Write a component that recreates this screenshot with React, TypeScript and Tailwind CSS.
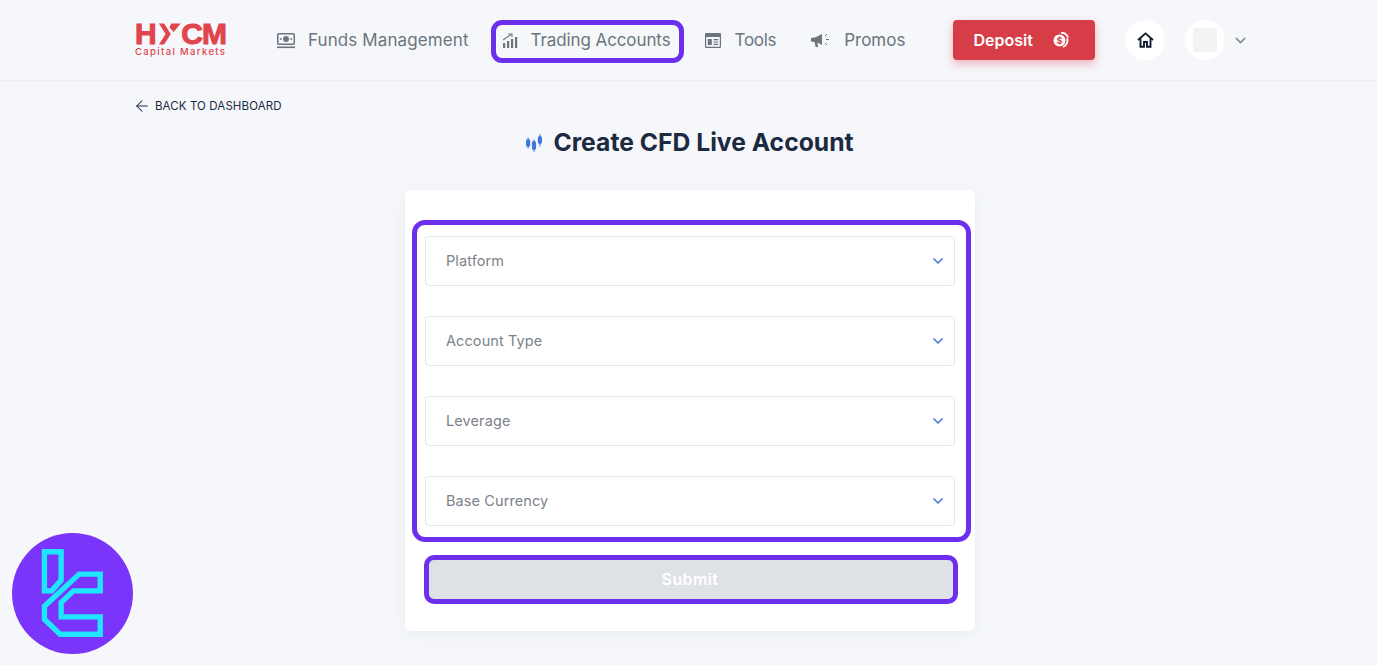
import { ChevronDown, ArrowLeft } from 'lucide-react';

function FundsIcon() {
  return (
    <svg width="18" height="16" viewBox="0 0 18 16" className="text-[#6c757d]">
      <rect x="0.75" y="0.75" width="16.5" height="10.5" rx="1" fill="none" stroke="currentColor" strokeWidth="1.5" />
      <circle cx="9" cy="6" r="3" fill="currentColor" />
      <circle cx="3.8" cy="6" r="0.9" fill="currentColor" />
      <circle cx="14.2" cy="6" r="0.9" fill="currentColor" />
      <rect x="0" y="13.5" width="18" height="1.6" fill="currentColor" />
    </svg>
  );
}

function ChartIcon() {
  return (
    <svg width="15" height="15" viewBox="0 0 15 15" className="text-[#6c757d]">
      <rect x="0" y="10" width="2.2" height="5" fill="currentColor" />
      <rect x="4" y="8" width="2.2" height="7" fill="currentColor" />
      <rect x="8" y="6" width="2.2" height="9" fill="currentColor" />
      <rect x="12" y="4" width="2.2" height="11" fill="currentColor" />
      <path d="M0 7 L8 1.5 M5.5 1 H9 V4" fill="none" stroke="currentColor" strokeWidth="1.1" />
    </svg>
  );
}

function ToolsIcon() {
  return (
    <svg width="16" height="15" viewBox="0 0 16 15" className="text-[#6c757d]">
      <rect x="0.6" y="0.6" width="14.8" height="13.8" rx="0.6" fill="none" stroke="currentColor" strokeWidth="1.2" />
      <rect x="0.6" y="0.6" width="14.8" height="3.4" fill="currentColor" />
      <rect x="2.8" y="6" width="4" height="6" fill="currentColor" />
      <path d="M8.5 6.6 H13.2 M8.5 9 H13.2 M8.5 11.4 H13.2" stroke="currentColor" strokeWidth="1.1" />
    </svg>
  );
}

function PromoIcon() {
  return (
    <svg width="20" height="16" viewBox="0 0 20 16" className="text-[#6c757d]">
      <path d="M0 5 L4 4.5 L11 1 V12 L6.5 9.5 L7 14 H4.6 L3.6 9 L0 8.5 Z" fill="currentColor" />
      <path d="M14 3 L16 1 M15 6.5 H18 M14 10 L16 12" stroke="currentColor" strokeWidth="1" />
    </svg>
  );
}

function CoinIcon() {
  return (
    <svg width="16" height="16" viewBox="0 0 16 16">
      <circle cx="6.5" cy="8.5" r="6" fill="#fff" />
      <text x="6.5" y="11.5" textAnchor="middle" fontSize="8.5" fontWeight="700" fill="#d63d46" fontFamily="Inter, sans-serif">$</text>
      <path d="M8 0.8 A7 7 0 0 1 15 5.5" fill="none" stroke="#fff" strokeWidth="1.8" />
      <path d="M14.2 6 A7.5 7.5 0 0 1 10 15" fill="none" stroke="#fff" strokeWidth="1.8" />
    </svg>
  );
}

function HomeIcon() {
  return (
    <svg width="17" height="16" viewBox="0 0 17 16" fill="none" stroke="#111c2e" strokeWidth="1.9">
      <path d="M1 8 L8.5 1.4 L16 8" />
      <path d="M3.5 6.5 V14.8 H7 V10 H10 V14.8 H13.5 V6.5" />
    </svg>
  );
}

function CandlesIcon() {
  return (
    <svg width="16" height="18" viewBox="0 0 16 18" fill="#3f78dc">
      <rect x="0" y="5" width="4.2" height="8" rx="2" />
      <rect x="1.6" y="3.5" width="1" height="11" />
      <rect x="5.9" y="7" width="4.2" height="9" rx="2" />
      <rect x="7.5" y="5.5" width="1" height="12.5" />
      <rect x="11.8" y="2" width="4.2" height="8" rx="2" />
      <rect x="13.4" y="0" width="1" height="12.5" />
    </svg>
  );
}

function TcBadge() {
  return (
    <svg width="121" height="121" viewBox="36 24 362 362" className="absolute left-[12px] top-[533px]">
      <circle cx="217" cy="205" r="181" fill="#7b34fa" />
      <g fill="none" stroke="#1fe6ff" strokeWidth="16">
        <path d="M133 80 H183 V165 L155 197 H133 Z" />
        <path d="M237 147 H300 V197 H220 L183 232 V275 H300 V327 H180 L133 282 V243 Z" />
      </g>
    </svg>
  );
}

const fields = ['Platform', 'Account Type', 'Leverage', 'Base Currency'];

export default function App() {
  return (
    <div className="relative h-screen overflow-hidden bg-[#f5f7fb] font-['Inter',sans-serif]">
      <header className="flex h-[81px] items-center border-b border-[#eceef2] pl-[135px]">
        <div className="w-[91px] text-[#e0444c]">
          <div className="flex h-[22px] items-center font-['Liberation_Sans',sans-serif] text-[30px] font-bold leading-[22px] [-webkit-text-stroke:1px_#e0444c]">
            <span>H</span>
            <svg width="25" height="22" viewBox="0 0 25 22" className="mx-[1px]" fill="currentColor">
              <path d="M1 0 H6.5 L13.5 11 L6.5 22 H1 L8 11 Z" />
              <path d="M14 0 H24 L16.5 9 L12 4 Z" />
            </svg>
            <span className="-ml-[1px] tracking-[-1px]">CM</span>
          </div>
          <div className="mt-[2px] text-[9.5px] font-medium leading-[10px] tracking-[1.35px] whitespace-nowrap">Capital Markets</div>
        </div>

        <nav className="ml-[51px] flex items-center pt-[3px] text-[17px] tracking-[0.1px] text-[#6c757d]">
          <a className="flex items-center pb-[2px]">
            <FundsIcon />
            <span className="ml-[13px]">Funds Management</span>
          </a>
          <a className="ml-[22px] flex h-[43px] w-[193px] items-center rounded-[11px] border-[5px] border-[#6d2fee] pb-[2px] pl-[7px]">
            <ChartIcon />
            <span className="ml-[13px] whitespace-nowrap tracking-[-0.1px]">Trading Accounts</span>
          </a>
          <a className="ml-[21px] flex items-center pb-[2px]">
            <ToolsIcon />
            <span className="ml-[14px] tracking-[-0.3px]">Tools</span>
          </a>
          <a className="ml-[35px] flex items-center pb-[2px]">
            <PromoIcon />
            <span className="ml-[13px] tracking-[0px]">Promos</span>
          </a>
        </nav>

        <button className="ml-[48px] flex h-[40px] w-[142px] items-center rounded-[4px] bg-[#d63d46] pl-[20px] text-[16px] font-semibold text-white shadow-[0_4px_10px_rgba(214,61,70,0.35)]">
          Deposit
          <span className="ml-[20px]">
            <CoinIcon />
          </span>
        </button>
        <div className="ml-[30px] flex h-[40px] w-[40px] items-center justify-center rounded-full bg-white">
          <HomeIcon />
        </div>
        <div className="ml-[20px] flex h-[40px] w-[40px] items-center justify-center rounded-full bg-white">
          <div className="h-[24px] w-[24px] bg-[#f3f3f4]" />
        </div>
        <ChevronDown className="ml-[7px] text-[#8a9097]" size={17} strokeWidth={2.4} />
      </header>

      <main>
        <a className="ml-[135px] mt-[17px] flex h-[16px] items-center text-[11.5px] leading-[16px] tracking-[0.1px] text-[#1b2a41]">
          <ArrowLeft className="-ml-[2px]" size={18} strokeWidth={1.4} />
          <span className="ml-[4px]">BACK TO DASHBOARD</span>
        </a>

        <div className="ml-[405px] w-[570px]">
          <h1 className="mt-[11px] flex h-[36px] items-center justify-center text-[24.7px] font-bold text-[#1b2a41]">
            <CandlesIcon />
            <span className="ml-[11px]">Create CFD Live Account</span>
          </h1>

          <div className="mt-[29px] rounded-[6px] bg-white pb-[27px] pt-[30px] shadow-[0_4px_14px_rgba(90,105,130,0.07)]">
            <div className="ml-[7px] flex w-[559px] flex-col gap-[30px] rounded-[13px] border-[5px] border-[#6d2fee] py-[11px] pl-[8px]">
              {fields.map((field) => (
                <div key={field} className="flex h-[50px] w-[530px] items-center justify-between rounded-[4px] border border-[#e4e6ea] bg-white pl-[20px] pr-[8px] text-[14.5px] tracking-[0.1px] text-[#7c8289]">
                  {field}
                  <ChevronDown className="text-[#4a7fd4]" size={16} strokeWidth={2.6} />
                </div>
              ))}
            </div>
            <button className="ml-[19px] mt-[13px] flex h-[49px] w-[534px] items-center justify-center rounded-[10px] border-[5px] border-[#6d2fee] bg-[#dee1e5] pb-[2px] pr-[2px] text-[16px] font-semibold tracking-[0.4px] text-white">
              Submit
            </button>
          </div>
        </div>
      </main>

      <TcBadge />
    </div>
  );
}
